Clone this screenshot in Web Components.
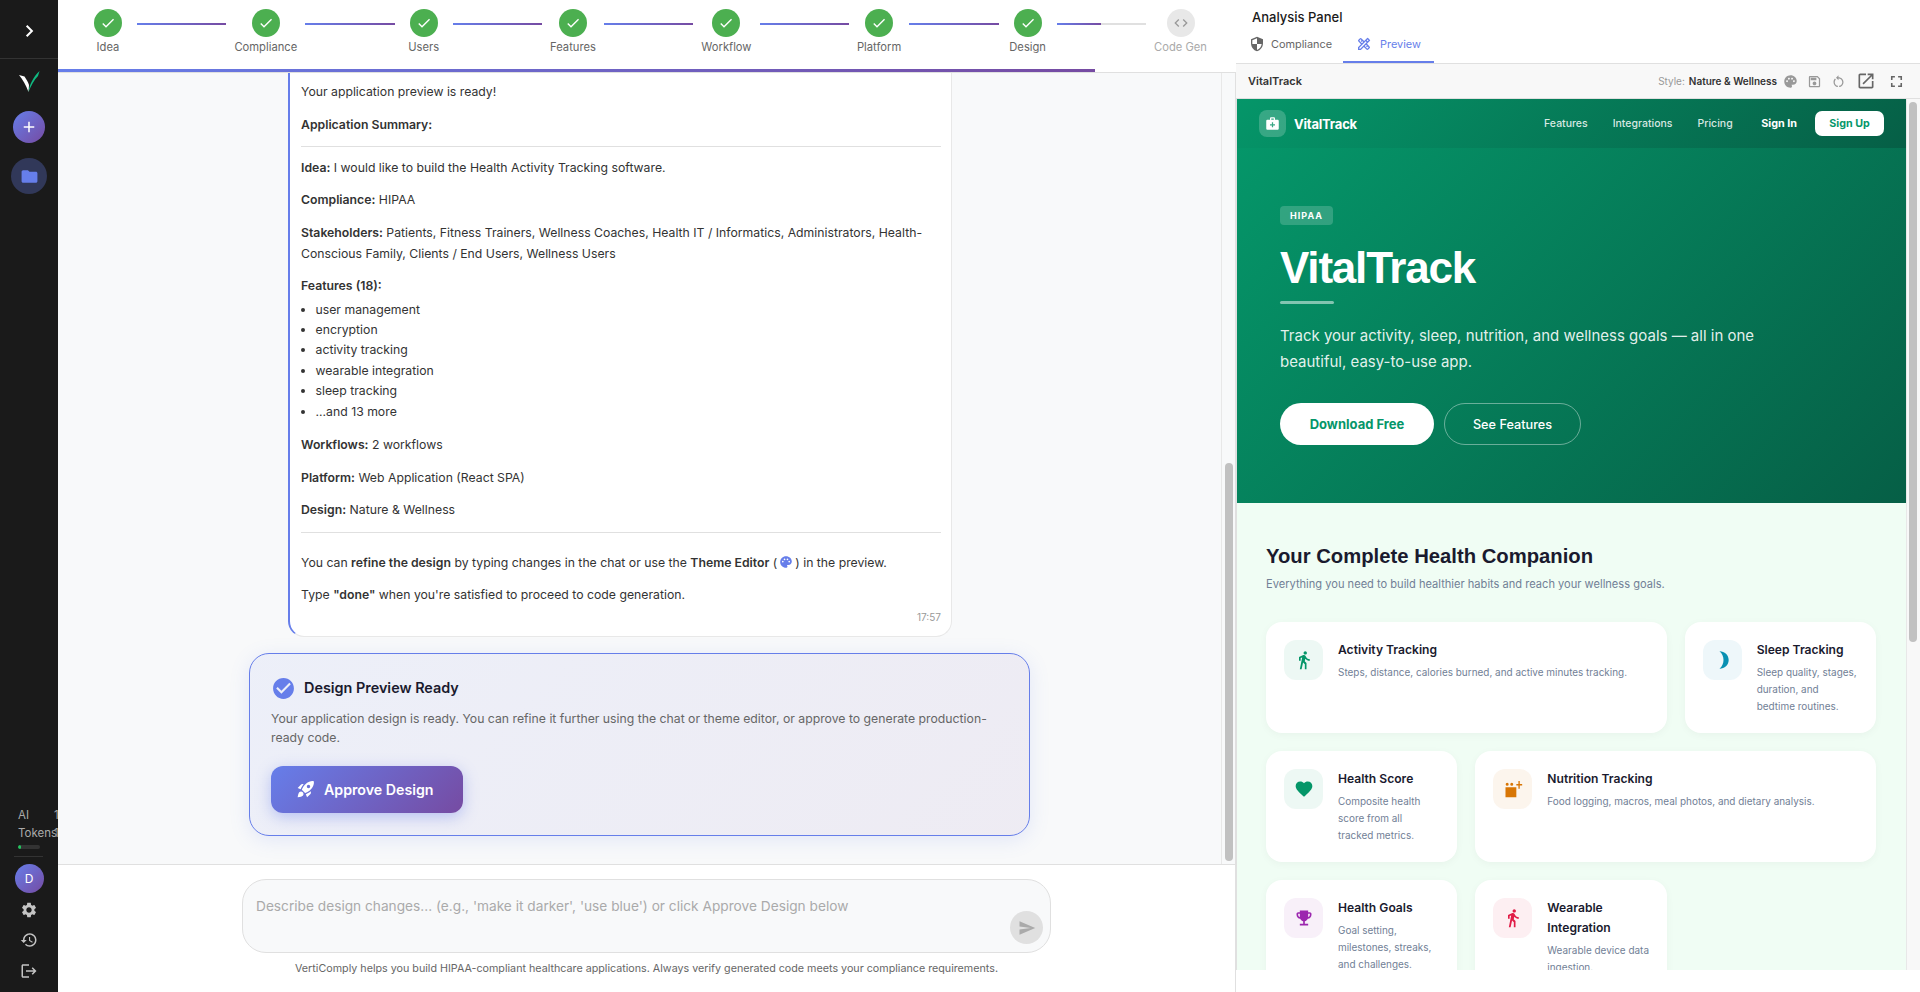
<!DOCTYPE html>
<html lang="en">
<head>
<meta charset="utf-8">
<title>VertiComply</title>
<style>
  html, body { margin: 0; height: 100%; overflow: hidden; background: #fff; font-family: Inter, "Liberation Sans", sans-serif; }
  app-shell { height: 992px; }
</style>
</head>
<body>
<app-shell>
  <app-sidebar slot="side"></app-sidebar>
  <step-bar slot="steps"></step-bar>
  <chat-scroll slot="chat">
    <summary-message></summary-message>
    <design-card></design-card>
  </chat-scroll>
  <chat-input slot="input"></chat-input>
  <analysis-panel slot="panel">
    <site-preview></site-preview>
  </analysis-panel>
</app-shell>

<script>
const ICONS = {
  check: 'M9 16.17 4.83 12l-1.42 1.41L9 19 21 7l-1.41-1.41z',
  code: 'M9.4 16.6 4.8 12l4.6-4.6L8 6l-6 6 6 6 1.4-1.4zm5.2 0 4.6-4.6-4.6-4.6L16 6l6 6-6 6-1.4-1.4z',
  shield: 'M12 1 3 5v6c0 5.55 3.84 10.74 9 12 5.16-1.26 9-6.45 9-12V5l-9-4zm0 10.99h7c-.53 4.12-3.28 7.79-7 8.94V12H5V6.3l7-3.11v8.8z',
  design: 'M20.97 7.27a1 1 0 0 0 0-1.41l-2.83-2.83a1 1 0 0 0-1.41 0l-4.49 4.49-3.89-3.89a2 2 0 0 0-2.83 0l-1.9 1.9a2 2 0 0 0 0 2.83l3.89 3.89L3 16.76V21h4.24l4.52-4.52 3.89 3.89c.95.95 2.23.6 2.83 0l1.9-1.9a2 2 0 0 0 0-2.83l-3.89-3.89 4.48-4.48zM5.04 6.94l1.89-1.9 1.27 1.27-1.18 1.19 1.41 1.41L9.62 7.73l1.2 1.2-1.89 1.89-3.89-3.88zm11.23 7.44-1.19 1.19 1.41 1.41 1.19-1.19 1.27 1.27-1.9 1.89-3.89-3.89 1.9-1.89 1.21 1.21zM6.41 19H5v-1.41l9.61-9.61 1.3 1.3.11.11L6.41 19zm9.61-12.44 1.41-1.41 1.41 1.41-1.41 1.41-1.41-1.41z',
  palette: 'M12 2C6.49 2 2 6.49 2 12s4.49 10 10 10c1.38 0 2.5-1.12 2.5-2.5 0-.61-.23-1.2-.64-1.67-.08-.1-.13-.21-.13-.33 0-.28.22-.5.5-.5H16c3.31 0 6-2.69 6-6 0-4.96-4.49-9-10-9zm5.5 11c-.83 0-1.5-.67-1.5-1.5s.67-1.5 1.5-1.5 1.5.67 1.5 1.5-.67 1.5-1.5 1.5zm-3-4c-.83 0-1.5-.67-1.5-1.5S13.67 6 14.5 6s1.5.67 1.5 1.5S15.33 9 14.5 9zM5 11.5c0-.83.67-1.5 1.5-1.5s1.5.67 1.5 1.5S7.33 13 6.5 13 5 12.33 5 11.5zm6-4c0 .83-.67 1.5-1.5 1.5S8 8.33 8 7.5 8.67 6 9.5 6s1.5.67 1.5 1.5z',
  save: 'M17 3H5c-1.11 0-2 .9-2 2v14c0 1.1.89 2 2 2h14c1.1 0 2-.9 2-2V7l-4-4zm2 16H5V5h11.17L19 7.83V19zm-7-7c-1.66 0-3 1.34-3 3s1.34 3 3 3 3-1.34 3-3-1.34-3-3-3zM6 6h9v4H6z',
  reset: 'M12 5V2L8 6l4 4V7c3.31 0 6 2.69 6 6 0 2.97-2.17 5.43-5 5.91v2.02c3.95-.49 7-3.85 7-7.93 0-4.42-3.58-8-8-8zm-6 8c0-1.65.67-3.15 1.76-4.24L6.34 7.34C4.9 8.79 4 10.79 4 13c0 4.08 3.05 7.44 7 7.93v-2.02c-2.83-.48-5-2.94-5-5.91z',
  open: 'M19 19H5V5h7V3H5c-1.11 0-2 .9-2 2v14c0 1.1.89 2 2 2h14c1.1 0 2-.9 2-2v-7h-2v7zM14 3v2h3.59l-9.83 9.83 1.41 1.41L19 6.41V10h2V3h-7z',
  full: 'M7 14H5v5h5v-2H7v-3zm-2-4h2V7h3V5H5v5zm12 7h-3v2h5v-5h-2v3zM14 5v2h3v3h2V5h-5z',
  gear: 'M19.14 12.94c.04-.3.06-.61.06-.94 0-.32-.02-.64-.07-.94l2.03-1.58c.18-.14.23-.41.12-.61l-1.92-3.32c-.12-.22-.37-.29-.59-.22l-2.39.96c-.5-.38-1.03-.7-1.62-.94l-.36-2.54c-.04-.24-.24-.41-.48-.41h-3.84c-.24 0-.43.17-.47.41l-.36 2.54c-.59.24-1.13.57-1.62.94l-2.39-.96c-.22-.08-.47 0-.59.22L2.74 8.87c-.12.21-.08.47.12.61l2.03 1.58c-.05.3-.09.63-.09.94s.02.64.07.94l-2.03 1.58c-.18.14-.23.41-.12.61l1.92 3.32c.12.22.37.29.59.22l2.39-.96c.5.38 1.03.7 1.62.94l.36 2.54c.05.24.24.41.48.41h3.84c.24 0 .44-.17.47-.41l.36-2.54c.59-.24 1.13-.56 1.62-.94l2.39.96c.22.08.47 0 .59-.22l1.92-3.32c.12-.22.07-.47-.12-.61l-2.01-1.58zM12 15.6c-1.98 0-3.6-1.62-3.6-3.6s1.62-3.6 3.6-3.6 3.6 1.62 3.6 3.6-1.62 3.6-3.6 3.6z',
  history: 'M13 3c-4.97 0-9 4.03-9 9H1l3.89 3.89.07.14L9 12H6c0-3.87 3.13-7 7-7s7 3.13 7 7-3.13 7-7 7c-1.93 0-3.68-.79-4.94-2.06l-1.42 1.42C8.27 19.99 10.51 21 13 21c4.97 0 9-4.03 9-9s-4.03-9-9-9zm-1 5v5l4.28 2.54.72-1.21-3.5-2.08V8H12z',
  logout: 'M17 7l-1.41 1.41L18.17 11H8v2h10.17l-2.58 2.58L17 17l5-5zM4 5h8V3H4c-1.1 0-2 .9-2 2v14c0 1.1.9 2 2 2h8v-2H4V5z',
  folder: 'M10 4H4c-1.1 0-1.99.9-1.99 2L2 18c0 1.1.9 2 2 2h16c1.1 0 2-.9 2-2V8c0-1.1-.9-2-2-2h-8l-2-2z',
  send: 'M2.01 21 23 12 2.01 3 2 10l15 2-15 2z',
  rocket: 'M9.19 6.35c-2.04 2.29-3.44 5.58-3.57 5.89L2 10.69l4.05-4.05c.47-.47 1.15-.68 1.81-.55l1.33.26zM11.17 17s3.74-1.55 5.89-3.7c5.4-5.4 4.5-9.62 4.21-10.57-.95-.3-5.17-1.19-10.57 4.21C8.55 9.09 7 12.83 7 12.83L11.17 17zm6.48-2.19c-2.29 2.04-5.58 3.44-5.89 3.57L13.31 22l4.05-4.05c.47-.47.68-1.15.55-1.81l-.26-1.33zM9 18c0 .83-.34 1.58-.88 2.12C6.94 21.3 2 22 2 22s.7-4.94 1.88-6.12C4.42 15.34 5.17 15 6 15c1.66 0 3 1.34 3 3zm4-9c0-1.1.9-2 2-2s2 .9 2 2-.9 2-2 2-2-.9-2-2z',
  circleCheck: 'M12 2C6.48 2 2 6.48 2 12s4.48 10 10 10 10-4.48 10-10S17.52 2 12 2zm-2 15-5-5 1.41-1.41L10 14.17l7.59-7.59L19 8l-9 9z',
  bag: 'M20 6h-4V4c0-1.1-.9-2-2-2h-4c-1.1 0-2 .9-2 2v2H4c-1.1 0-2 .9-2 2v12c0 1.1.9 2 2 2h16c1.1 0 2-.9 2-2V8c0-1.1-.9-2-2-2zM10 4h4v2h-4V4zm6 11h-3v3h-2v-3H8v-2h3v-3h2v3h3v2z',
  walk: 'M13.5 5.5c1.1 0 2-.9 2-2s-.9-2-2-2-2 .9-2 2 .9 2 2 2zM9.8 8.9 7 23h2.1l1.8-8 2.1 2v6h2v-7.5l-2.1-2 .6-3C14.8 12 16.8 13 19 13v-2c-1.9 0-3.5-1-4.3-2.4l-1-1.6c-.4-.6-1-1-1.7-1-.3 0-.5.1-.8.1L6 8.3V13h2V9.6l1.8-.7',
  moon: 'M9 1.5c6.2 0 11 4.7 11 10.500s-4.800 10.500-11 10.500c3.200-2.700 4.800-6.400 4.800-10.500S12.200 4.200 9 1.500z',
  heart: 'M12 21.35 10.55 20.03C5.4 15.36 2 12.28 2 8.5 2 5.42 4.42 3 7.5 3c1.74 0 3.41.81 4.5 2.09C13.09 3.81 14.76 3 16.5 3 19.58 3 22 5.42 22 8.5c0 3.78-3.4 6.86-8.55 11.54z',
  food: 'M3 10h13v12H3zM5 4.500a1.800 1.800 0 1 1 0 3.600 1.800 1.800 0 0 1 0-3.600zM10.500 4.500a1.800 1.800 0 1 1 0 3.600 1.800 1.800 0 0 1 0-3.600zM18.500 2.500h1.600v3.500h2.900v1.700h-2.900v4h-1.600v-4h-2.500v-1.700h2.500z',
  trophy: 'M19 5h-2V3H7v2H5c-1.1 0-2 .9-2 2v1c0 2.55 1.92 4.63 4.39 4.94.63 1.5 1.98 2.63 3.61 2.96V19H7v2h10v-2h-4v-3.100c1.630-.33 2.980-1.460 3.610-2.960C19.080 12.630 21 10.550 21 8V7c0-1.100-.9-2-2-2zM5 8V7h2v3.820C5.840 10.400 5 9.300 5 8zm14 0c0 1.300-.84 2.400-2 2.820V7h2v1z'
};

function icon(name, size, color) {
  return `<svg width="${size}" height="${size}" viewBox="0 0 24 24" fill="${color || 'currentColor'}" style="display:block;flex:none"><path fill-rule="evenodd" d="${ICONS[name]}"/></svg>`;
}

class AppShell extends HTMLElement {
  constructor() {
    super();
    this.attachShadow({ mode: 'open' });
    this.shadowRoot.innerHTML = `
      <style>
        :host { display: flex; width: 1920px; }
        .side { flex: 0 0 58px; }
        .main { flex: 0 0 1178px; display: flex; flex-direction: column; min-width: 0; }
        .panel { flex: 1; min-width: 0; display: flex; }
      </style>
      <div class="side"><slot name="side"></slot></div>
      <div class="main">
        <slot name="steps"></slot>
        <slot name="chat"></slot>
        <slot name="input"></slot>
      </div>
      <div class="panel"><slot name="panel"></slot></div>
    `;
  }
}

class AppSidebar extends HTMLElement {
  constructor() {
    super();
    this.attachShadow({ mode: 'open' });
    this.shadowRoot.innerHTML = `
      <style>
        :host { display: flex; flex-direction: column; height: 992px; background: #1a1a1a; color: #bbb; font-family: Inter, sans-serif; }
        .top { height: 36px; border-bottom: 1px solid #333; display: flex; justify-content: center; padding-top: 22px; }
        .logo { margin: 12px auto 0; width: 21px; height: 21px; }
        .plus { width: 32px; height: 32px; border-radius: 50%; margin: 19px auto 0; background: linear-gradient(135deg, #667eea, #764ba2); display: flex; align-items: center; justify-content: center; }
        .folder { width: 36px; height: 36px; border-radius: 50%; margin: 15px auto 0; background: rgba(102,126,234,.3); display: flex; align-items: center; justify-content: center; color: #667eea; }
        .grow { flex: 1; }
        .tokens { padding-left: 18px; width: 40px; overflow: hidden; font-size: 11.500px; line-height: 18px; color: #aaa; }
        .row { display: flex; white-space: nowrap; }
        .row span:first-child { width: 36px; flex: none; }
        .meter { width: 22px; height: 4px; border-radius: 2px; background: #333; margin-top: 3px; overflow: hidden; }
        .meter i { display: block; width: 3px; height: 4px; background: #22c55e; border-radius: 2px; }
        .rule { height: 1px; background: #333; margin: 7px 15px 7px 14px; }
        .avatar { width: 29px; height: 29px; border-radius: 50%; margin: 0 auto; background: linear-gradient(135deg, #667eea, #764ba2); color: #fff; font-size: 12px; display: flex; align-items: center; justify-content: center; }
        .btn { height: 30.500px; display: flex; align-items: center; justify-content: center; color: #c4c4c4; }
        .btn.first { margin-top: 2px; }
        .bottom { padding-bottom: 6px; }
      </style>
      <div class="top">
        <svg width="14" height="14" viewBox="0 0 24 24" fill="none" stroke="#fff" stroke-width="3.400" style="margin-top:2px"><path d="M8 3l9 9-9 9"/></svg>
      </div>
      <div class="logo">
        <svg width="21" height="21" viewBox="0 0 21 21">
          <path fill="#fff" d="M0 4 5.500 5.500C7.500 8.500 9 11 10 14L9.500 21C7 14 3.500 8.500 0 4z"/>
          <path fill="#10b981" d="M9.500 21C10.500 14 14 6 20.600 0L19 5C15 9 12 15 9.500 21z"/>
        </svg>
      </div>
      <div class="plus"><svg width="18" height="18" viewBox="0 0 24 24" fill="#fff"><path d="M19 13h-6v6h-2v-6H5v-2h6V5h2v6h6v2z"/></svg></div>
      <div class="folder">${icon('folder', 19)}</div>
      <div class="grow"></div>
      <div class="tokens">
        <div class="row"><span>AI</span><span>1</span></div>
        <div class="row"><span>Tokens</span><span>1</span></div>
        <div class="meter"><i></i></div>
      </div>
      <div class="rule"></div>
      <div class="avatar">D</div>
      <div class="bottom">
        <div class="btn first">${icon('gear', 18)}</div>
        <div class="btn">${icon('history', 18)}</div>
        <div class="btn">${icon('logout', 18)}</div>
      </div>
    `;
  }
}

class StepBar extends HTMLElement {
  constructor() {
    super();
    this.attachShadow({ mode: 'open' });
    const names = ['Idea', 'Compliance', 'Users', 'Features', 'Workflow', 'Platform', 'Design', 'Code Gen'];
    const steps = names.map((n, i) => {
      const done = i < 7;
      const dot = done
        ? `<span class="dot done">${icon('check', 16, '#fff')}</span>`
        : `<span class="dot todo">${icon('code', 16, '#999')}</span>`;
      const link = i === names.length - 1 ? '' : `<span class="link"><i style="width:${i === 6 ? 50 : 100}%"></i></span>`;
      return `<div class="step ${done ? '' : 'off'}">${dot}<span class="label">${n}</span></div>${link}`;
    }).join('');
    this.shadowRoot.innerHTML = `
      <style>
        :host { display: block; height: 73px; box-sizing: border-box; background: #fff; border-bottom: 1px solid #e0e0e0; font-family: Inter, sans-serif; }
        .row { height: 69px; box-sizing: border-box; display: flex; padding: 9px 29px 0; }
        .step { min-width: 42px; display: flex; flex-direction: column; align-items: center; }
        .dot { width: 28px; height: 28px; border-radius: 50%; display: flex; align-items: center; justify-content: center; }
        .done { background: #4caf50; }
        .todo { background: #e8e8e8; }
        .label { font-size: 11.200px; line-height: 14px; margin-top: 3px; color: #666; white-space: nowrap; }
        .off .label { color: #aaa; }
        .link { flex: 1; height: 2px; margin: 14px 8px 0; background: #e0e0e0; }
        .link i { display: block; height: 2px; background: linear-gradient(90deg, #667eea, #764ba2); }
        .progress { height: 3px; width: 1037px; background: linear-gradient(90deg, #667eea, #764ba2); }
      </style>
      <div class="row">${steps}</div>
      <div class="progress"></div>
    `;
  }
}

class ChatScroll extends HTMLElement {
  constructor() {
    super();
    this.attachShadow({ mode: 'open' });
    this.shadowRoot.innerHTML = `
      <style>
        :host { display: flex; height: 791px; background: #f8f9fa; border-right: 1px solid #e0e0e0; box-sizing: border-box; }
        .list { flex: 1; min-width: 0; overflow: hidden; }
        .bar { flex: 0 0 14px; border-left: 1px solid #e8e8e8; background: #f8f9fa; padding-top: 390px; box-sizing: border-box; }
        .thumb { width: 8px; height: 398px; margin-left: 3px; border-radius: 4px; background: #c1c1c1; }
      </style>
      <div class="list"><slot></slot></div>
      <div class="bar"><div class="thumb"></div></div>
    `;
  }
}

class SummaryMessage extends HTMLElement {
  constructor() {
    super();
    this.attachShadow({ mode: 'open' });
    const feats = ['user management', 'encryption', 'activity tracking', 'wearable integration', 'sleep tracking', '...and 13 more'];
    this.shadowRoot.innerHTML = `
      <style>
        :host { display: block; width: 664px; margin-left: 230px; box-sizing: border-box; background: #fff; border: 1px solid #e8e8e8; border-top: 0; border-left: 2px solid #667eea; border-radius: 0 0 16px 16px; padding: 9px 10px 12px 11px; font-family: Inter, sans-serif; font-size: 12.250px; line-height: 20.400px; color: #333; }
        p { margin: 0 0 12.300px; }
        p.pre { margin-bottom: 10.800px; }
        b { font-weight: 600; }
        hr { border: 0; border-top: 1px solid #e0e0e0; margin: 10.800px 0; }
        hr.wide { margin-bottom: 20px; }
        p.tight { margin-bottom: 3px; }
        ul { margin: 0 0 13px; padding-left: 14.500px; list-style: none; }
        li { position: relative; }
        li::before { content: ''; position: absolute; left: -14.500px; top: 8px; width: 4px; height: 4px; border-radius: 50%; background: #333; }
        .pal { display: inline-block; vertical-align: -2px; margin: 0 2px; }
        time { display: block; text-align: right; font-size: 10px; line-height: 13px; color: #999; margin-top: 5px; }
      </style>
      <p>Your application preview is ready!</p>
      <p class="pre"><b>Application Summary:</b></p>
      <hr>
      <p><b>Idea:</b> I would like to build the Health Activity Tracking software.</p>
      <p><b>Compliance:</b> HIPAA</p>
      <p><b>Stakeholders:</b> Patients, Fitness Trainers, Wellness Coaches, Health IT / Informatics, Administrators, Health-Conscious Family, Clients / End Users, Wellness Users</p>
      <p class="tight"><b>Features (18):</b></p>
      <ul>${feats.map(f => `<li>${f}</li>`).join('')}</ul>
      <p><b>Workflows:</b> 2 workflows</p>
      <p><b>Platform:</b> Web Application (React SPA)</p>
      <p class="pre"><b>Design:</b> Nature &amp; Wellness</p>
      <hr class="wide">
      <p>You can <b>refine the design</b> by typing changes in the chat or use the <b>Theme Editor</b> (<span class="pal"><svg width="14" height="14" viewBox="0 0 24 24" fill="#667eea" style="display:block"><path fill-rule="evenodd" d="${ICONS.palette}"/></svg></span>) in the preview.</p>
      <p style="margin:0">Type <b>"done"</b> when you're satisfied to proceed to code generation.</p>
      <time>17:57</time>
    `;
  }
}

class DesignCard extends HTMLElement {
  constructor() {
    super();
    this.attachShadow({ mode: 'open' });
    this.shadowRoot.innerHTML = `
      <style>
        :host { display: block; width: 781px; height: 183px; box-sizing: border-box; margin: 16px 0 0 191px; padding: 22px 21px 0; border: 1px solid #667eea; border-radius: 20px; background: linear-gradient(135deg, rgba(102,126,234,.08), rgba(118,75,162,.08)); box-shadow: 0 4px 20px rgba(102,126,234,.15); font-family: Inter, sans-serif; }
        .head { display: flex; align-items: center; gap: 8px; }
        .head span { font-size: 14.400px; line-height: 22px; font-weight: 600; color: #1a1a2e; }
        p { margin: 8px 0 0; font-size: 12.250px; line-height: 19px; color: #666; }
        .go { display: inline-flex; align-items: center; gap: 8px; height: 47px; width: 192px; box-sizing: border-box; padding-left: 25px; margin-top: 19px; border-radius: 12px; background: linear-gradient(135deg, #667eea, #764ba2); box-shadow: 0 4px 15px rgba(102,126,234,.4); color: #fff; font-size: 14.200px; font-weight: 600; }
      </style>
      <div class="head">${icon('circleCheck', 25, '#667eea')}<span>Design Preview Ready</span></div>
      <p>Your application design is ready. You can refine it further using the chat or theme editor, or approve to generate production-ready code.</p>
      <div class="go">${icon('rocket', 20, '#fff')}<span>Approve Design</span></div>
    `;
  }
}

class ChatInput extends HTMLElement {
  constructor() {
    super();
    this.attachShadow({ mode: 'open' });
    this.shadowRoot.innerHTML = `
      <style>
        :host { display: block; height: 128px; box-sizing: border-box; background: #fff; border-top: 1px solid #e0e0e0; border-right: 1px solid #e0e0e0; padding-top: 14px; font-family: Inter, sans-serif; }
        .box { width: 809px; height: 74px; box-sizing: border-box; margin: 0 auto; padding: 16px 7px 8px 13px; border: 1px solid #e0e0e0; border-radius: 24px; background: #f8f9fa; display: flex; justify-content: space-between; }
        .ph { font-size: 13.700px; line-height: 20px; color: #aaa; white-space: nowrap; }
        .send { width: 33px; height: 33px; border-radius: 50%; background: #e0e0e0; align-self: flex-end; display: flex; align-items: center; justify-content: center; }
        .note { margin-top: 9px; text-align: center; font-size: 10.730px; line-height: 14px; color: #666; }
      </style>
      <div class="box"><span class="ph">Describe design changes... (e.g., 'make it darker', 'use blue') or click Approve Design below</span><span class="send">${icon('send', 18, '#aaa')}</span></div>
      <div class="note">VertiComply helps you build HIPAA-compliant healthcare applications. Always verify generated code meets your compliance requirements.</div>
    `;
  }
}

class AnalysisPanel extends HTMLElement {
  constructor() {
    super();
    this.attachShadow({ mode: 'open' });
    this.shadowRoot.innerHTML = `
      <style>
        :host { display: flex; flex-direction: column; width: 684px; height: 992px; box-sizing: border-box; background: #fff; font-family: Inter, sans-serif; }
        .title { height: 32px; box-sizing: border-box; padding: 9px 0 0 16px; font-size: 13px; line-height: 16px; font-weight: 500; color: #1a1a1a; }
        .tabs { height: 32px; box-sizing: border-box; display: flex; border-bottom: 1px solid #e0e0e0; }
        .tab { display: flex; align-items: center; gap: 6px; height: 31px; box-sizing: border-box; padding: 0 11px 7px 13px; font-size: 10.900px; color: #666; }
        .tab.on { color: #667eea; gap: 8px; border-bottom: 2px solid #667eea; padding: 0 13px 5px 13px; }
        .bar { height: 35px; box-sizing: border-box; display: flex; align-items: center; padding: 0 14px 0 12px; background: #f8f8f8; border-bottom: 1px solid #e0e0e0; font-size: 11px; }
        .name { font-weight: 600; color: #333; flex: 1; }
        .style { color: #999; font-size: 10px; margin-right: 4px; }
        .val { font-weight: 600; color: #333; font-size: 10px; margin-right: 6px; }
        .tool { color: #999; margin-left: 9px; }
        .view { flex: 0 0 871px; overflow: hidden; display: flex; border-left: 1px solid #e0e0e0; }
        .scroll { flex: 0 0 14px; box-sizing: border-box; background: #f8f8f8; border-left: 1px solid #e8e8e8; padding: 3px 0 0 2px; }
        .scroll i { display: block; width: 8px; height: 540px; background: #c1c1c1; border-radius: 4px; }
        .site { flex: 1; min-width: 0; overflow: hidden; }
      </style>
      <div class="title">Analysis Panel</div>
      <div class="tabs">
        <div class="tab">${icon('shield', 16)}<span>Compliance</span></div>
        <div class="tab on">${icon('design', 16)}<span>Preview</span></div>
      </div>
      <div class="bar">
        <span class="name">VitalTrack</span>
        <span class="style">Style:</span><span class="val">Nature &amp; Wellness</span>
        <span class="tool" style="margin-left:0">${icon('palette', 15)}</span>
        <span class="tool">${icon('save', 15)}</span>
        <span class="tool">${icon('reset', 15)}</span>
        <span class="tool" style="color:#666;margin-left:10px">${icon('open', 20)}</span>
        <span class="tool" style="color:#666;margin-left:11px">${icon('full', 19)}</span>
      </div>
      <div class="view">
        <div class="site"><slot></slot></div>
        <div class="scroll"><i></i></div>
      </div>
    `;
  }
}

class FeatureCard extends HTMLElement {
  constructor() {
    super();
    this.attachShadow({ mode: 'open' });
    const ic = this.getAttribute('icon');
    const c = this.getAttribute('color');
    this.shadowRoot.innerHTML = `
      <style>
        :host { display: flex; gap: 15px; box-sizing: border-box; padding: 18px 17px 18px 18px; background: #fff; border-radius: 16px; box-shadow: 0 2px 8px rgba(0,0,0,.04); font-family: Inter, sans-serif; }
        .ic { flex: 0 0 39px; height: 40px; border-radius: 12px; display: flex; align-items: center; justify-content: center; position: relative; }
        .ic::before { content: ''; position: absolute; inset: 0; border-radius: 12px; background: ${c}; opacity: .07; }
        h3 { margin: 0 0 4px; font-size: 12.100px; line-height: 20px; font-weight: 600; color: #1a1a2e; }
        p { margin: 0; font-size: 9.950px; line-height: 17px; color: #718096; }
      </style>
      <div class="ic">${icon(ic, 20, c)}</div>
      <div><h3>${this.getAttribute('title')}</h3><p><slot></slot></p></div>
    `;
  }
}

class SitePreview extends HTMLElement {
  constructor() {
    super();
    this.attachShadow({ mode: 'open' });
    this.shadowRoot.innerHTML = `
      <style>
        :host { display: block; width: 669px; height: 871px; overflow: hidden; background: #f0fdf4; font-family: Inter, sans-serif; }
        .nav { height: 49px; box-sizing: border-box; display: flex; align-items: center; padding: 0 22px; background: linear-gradient(135deg, #059669, #065f46); color: #fff; }
        .logo { width: 27px; height: 27px; border-radius: 8px; background: rgba(255,255,255,.2); display: flex; align-items: center; justify-content: center; margin-right: 8px; }
        .brand { font-size: 13px; font-weight: 700; letter-spacing: -.2px; flex: 1; }
        .nav a { font-size: 10.500px; font-weight: 500; color: rgba(255,255,255,.85); margin-right: 25px; }
        .nav a.in { color: #fff; font-size: 10.800px; font-weight: 700; margin: 0 18px 0 3.500px; }
        .up { width: 69px; height: 25px; border-radius: 7px; background: #fff; color: #059669; font-size: 10.700px; font-weight: 700; display: flex; align-items: center; justify-content: center; }
        .hero { height: 355px; box-sizing: border-box; padding: 57.500px 43px 0; background: linear-gradient(135deg, #059669, #065f46); color: #fff; }
        .badge { display: block; height: 19px; width: 53px; box-sizing: border-box; text-align: center; border-radius: 4px; background: rgba(255,255,255,.18); font-size: 9px; line-height: 19px; font-weight: 700; letter-spacing: 1px; }
        h1 { margin: 18px 0 0; font-family: "Liberation Sans", sans-serif; font-size: 44px; line-height: 50px; font-weight: 700; letter-spacing: -1.200px; }
        .rule { width: 54px; height: 3px; margin-top: 8.500px; border-radius: 2px; background: rgba(255,255,255,.5); }
        .sub { margin: 19px 0 0; width: 480px; font-size: 15px; line-height: 26px; color: rgba(255,255,255,.9); }
        .cta { display: flex; gap: 10px; margin-top: 28px; }
        .cta span { height: 42px; box-sizing: border-box; border-radius: 21px; display: flex; align-items: center; justify-content: center; }
        .dl { width: 154px; background: #fff; color: #059669; font-size: 13px; font-weight: 700; }
        .see { width: 137px; border: 1px solid rgba(255,255,255,.4); font-size: 12.700px; font-weight: 500; }
        .body { padding: 39px 30px 0 29px; }
        h2 { margin: 0; font-family: "Liberation Sans", sans-serif; font-size: 20.250px; line-height: 28px; font-weight: 700; color: #1a1a2e; }
        .lead { margin: 6px 0 0; font-size: 11.100px; line-height: 17px; color: #718096; }
        .grid { display: grid; grid-template-columns: repeat(3, 1fr); gap: 18px; margin-top: 29px; }
        .grid .wide { grid-column: span 2; }
      </style>
      <div class="nav">
        <span class="logo">${icon('bag', 15, '#fff')}</span>
        <span class="brand">VitalTrack</span>
        <a>Features</a><a>Integrations</a><a>Pricing</a><a class="in">Sign In</a>
        <span class="up">Sign Up</span>
      </div>
      <div class="hero">
        <span class="badge">HIPAA</span>
        <h1>VitalTrack</h1>
        <div class="rule"></div>
        <p class="sub">Track your activity, sleep, nutrition, and wellness goals — all in one beautiful, easy-to-use app.</p>
        <div class="cta"><span class="dl">Download Free</span><span class="see">See Features</span></div>
      </div>
      <div class="body">
        <h2>Your Complete Health Companion</h2>
        <p class="lead">Everything you need to build healthier habits and reach your wellness goals.</p>
        <div class="grid">
          <feature-card class="wide" icon="walk" color="#059669" title="Activity Tracking">Steps, distance, calories burned, and active minutes tracking.</feature-card>
          <feature-card icon="moon" color="#0891b2" title="Sleep Tracking">Sleep quality, stages, duration, and bedtime routines.</feature-card>
          <feature-card icon="heart" color="#059669" title="Health Score">Composite health score from all<br>tracked metrics.</feature-card>
          <feature-card class="wide" icon="food" color="#d97706" title="Nutrition Tracking">Food logging, macros, meal photos, and dietary analysis.</feature-card>
          <feature-card icon="trophy" color="#9c27b0" title="Health Goals">Goal setting, milestones, streaks, and challenges.</feature-card>
          <feature-card icon="walk" color="#e11d48" title="Wearable Integration">Wearable device data ingestion.</feature-card>
        </div>
      </div>
    `;
  }
}

customElements.define('app-shell', AppShell);
customElements.define('app-sidebar', AppSidebar);
customElements.define('step-bar', StepBar);
customElements.define('chat-scroll', ChatScroll);
customElements.define('summary-message', SummaryMessage);
customElements.define('design-card', DesignCard);
customElements.define('chat-input', ChatInput);
customElements.define('analysis-panel', AnalysisPanel);
customElements.define('feature-card', FeatureCard);
customElements.define('site-preview', SitePreview);
</script>
</body>
</html>
